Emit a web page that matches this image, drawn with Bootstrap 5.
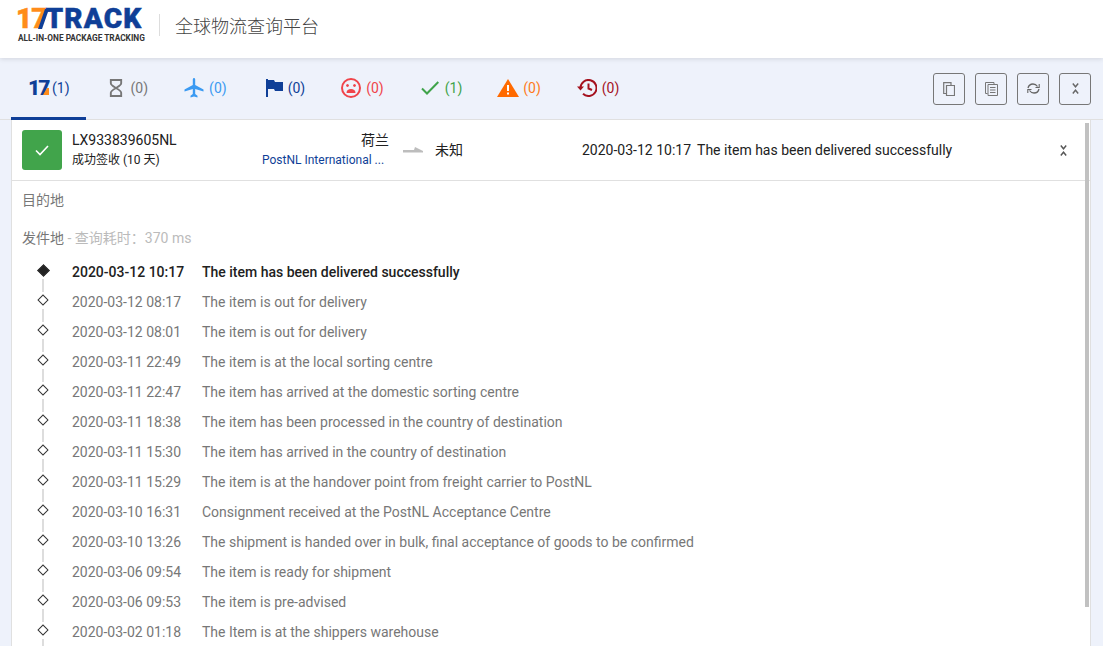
<!DOCTYPE html>
<html lang="zh"><head><meta charset="utf-8"><title>17TRACK</title>
<link href="https://cdn.jsdelivr.net/npm/bootstrap@5.3.0/dist/css/bootstrap.min.css" rel="stylesheet">
<style>
html,body{height:646px;overflow:hidden}
body{background:#eef2fb;font-family:Roboto,"Noto Sans CJK SC",sans-serif;font-size:14px;color:#212121}
.top-bar{height:58px;background:#fff;box-shadow:0 1px 5px rgba(0,0,0,.12);padding:0 0 8px 16px;position:relative;z-index:2}
.logo-box{width:129px;line-height:1}
.logo-main{font-family:Roboto,sans-serif;font-weight:900;font-size:28px;letter-spacing:1.200px;height:24px;line-height:24px;color:#0f3f97;-webkit-text-stroke:.5px #0f3f97;white-space:nowrap;display:flex;align-items:flex-end}
.logo-main b{color:#ff8c1a;-webkit-text-stroke:.5px #ff8c1a;font-weight:900;letter-spacing:-1px}
.logo-main svg{margin:0 -4px 2px -8px;flex:none}
.logo-sub{font-family:Roboto,sans-serif;font-weight:700;font-size:8.300px;color:#333;margin-top:3px;white-space:nowrap;margin-left:2px}
.top-sep{width:1px;height:22px;background:#ddd;margin:0 15px 0 14px}
.top-title{font-size:18px;color:#444;font-family:"Noto Sans CJK SC",sans-serif;font-weight:300}
.tab-bar{height:62px;padding:0 12px 0 11px;border-bottom:1px solid #e0e0e0}
.tab-item{height:62px;padding:1px 18px 0;gap:5px;border-bottom:3px solid transparent;margin-bottom:-1px}
.tab-item.is-on{border-bottom-color:#0f3f97;padding-left:17px;padding-right:16px;gap:4px}
.tab-item svg{display:block;flex:none}
.t-hour{padding-left:22px;gap:7px}
.t-flag{margin-left:3px}
.t-check{margin-left:1px;gap:6px}
.t-warn{margin-left:-1px;gap:4px}
.brand-mini{display:flex;flex:none;align-items:flex-end;width:20px;height:18px;font:900 21px/18px Roboto,sans-serif;letter-spacing:-2px}
.brand-mini svg{margin:0 0 2px -5px}
.c-blue{color:#0f3f97}.c-grey{color:#777}.c-sky{color:#3a9af2}.c-red{color:#f0444a}.c-green{color:#3fa34a}.c-orange{color:#ff7a1a}.c-dark{color:#a5121f}
.tool-btn{width:32px;height:32px;padding:0;border:1px solid #777;border-radius:3px;background:transparent;display:flex;align-items:center;justify-content:center}
.panel{margin:0 12px 0 11px;height:526px;background:#fff;border:1px solid #e0e0e0;border-top:0;border-bottom:0;position:relative;overflow:hidden}
.summary{height:61px;border-bottom:1px solid #e0e0e0;padding-left:10px}
.ok-box{width:40px;height:40px;background:#41a44b;border-radius:3px;margin-right:10px}
.num{width:190px;line-height:20px}
.num .sub{font-size:12px}
.origin{width:127px;text-align:right;line-height:20px}
.origin .carrier{font-size:12px;color:#0f3f97;white-space:nowrap;padding-right:6px}
.arrow{margin:0 12px 0 14px}
.dest{width:147px}
.latest{width:478px;white-space:nowrap}
.latest span{margin-right:6px}
.detail{padding:9px 10px 0}
.lbl{height:20px;line-height:20px;color:#777;margin-bottom:18px}
.lbl span{color:#bbb}
.lbl.second{margin-bottom:9px}
.ev{height:30px;line-height:30px;color:#777;display:flex;position:relative;white-space:nowrap}
.ev.cur{color:#212121;font-weight:500}
.ev-time{width:130px;margin-left:50px;flex:none}
.dot{position:absolute;left:17px;top:9px;width:8px;height:8px;border:1px solid #333;background:#fff;transform:rotate(45deg)}
.ev.cur .dot{background:#222;top:9px;left:16.500px;width:9px;height:9px}
.ev:not(.last)::after{content:"";position:absolute;left:20px;top:22px;width:2px;height:13px;background:#ddd}
.rail{position:absolute;right:1px;top:3px;width:4px;height:484px;background:#c1c1c1}
</style></head><body>
<header class="top-bar d-flex align-items-center">
  <div class="logo-box"><div class="logo-main"><b>17</b><svg width="11" height="20" viewBox="0 0 11 20"><path d="M7 0h4L4 20H0z" fill="#0f3f97"/></svg>TRACK</div><div class="logo-sub">ALL-IN-ONE PACKAGE TRACKING</div></div>
  <div class="top-sep"></div>
  <div class="top-title">全球物流查询平台</div>
</header>
<nav class="tab-bar d-flex align-items-center justify-content-between">
  <div class="d-flex">
    <div class="tab-item is-on d-flex align-items-center c-blue"><span class="brand-mini">17<svg width="6" height="7" viewBox="0 0 6 7"><path d="M4 0h2v7H0z" fill="#ff8c1a"/></svg></span><span>(1)</span></div>
    <div class="tab-item t-hour d-flex align-items-center c-grey"><svg width="16" height="20" viewBox="0 0 17 20" fill="none" stroke="#777" stroke-width="2"><path d="M2 1.500h13M2 18.500h13M3 2v3c0 2 3 3.500 5.500 5C11 11.500 14 13 14 15v3M14 2v3c0 2-3 3.500-5.500 5C6 11.500 3 13 3 15v3"/></svg><span>(0)</span></div>
    <div class="tab-item d-flex align-items-center c-sky"><svg width="20" height="20" viewBox="0 0 20 20" fill="#3a9af2"><path d="M8.800 1.500C8.800.6 9.400 0 10 0s1.200.6 1.200 1.500V7l8.300 4.500v2l-8.300-2.500v5l2.300 1.800V19.500L10 18.500l-3.500 1v-1.700l2.300-1.800v-5L.5 13.500v-2L8.800 7z"/></svg><span>(0)</span></div>
    <div class="tab-item t-flag d-flex align-items-center c-blue"><svg width="17" height="18" viewBox="0 0 17 18" fill="#0f3f97"><path d="M0 0h2v18H0zM2 1h6l1 2h8v9H9l-1-2H2z"/></svg><span>(0)</span></div>
    <div class="tab-item d-flex align-items-center c-red"><svg width="20" height="20" viewBox="0 0 20 20" fill="none" stroke="#f0444a" stroke-width="2"><circle cx="10" cy="10" r="9"/><circle cx="6.500" cy="7.500" r="1" fill="#f0444a" stroke-width="1"/><circle cx="13.500" cy="7.500" r="1" fill="#f0444a" stroke-width="1"/><path d="M5.500 15c0-3 2-4 4.500-4s4.500 1 4.500 4z" fill="#f0444a" stroke="none"/></svg><span>(0)</span></div>
    <div class="tab-item t-check d-flex align-items-center c-green"><svg width="18" height="14" viewBox="0 0 18 14" fill="none" stroke="#3fa34a" stroke-width="2"><path d="M1 7.500l5 5L17.300 1"/></svg><span>(1)</span></div>
    <div class="tab-item t-warn d-flex align-items-center c-orange"><svg width="22" height="18" viewBox="0 0 22 18"><path d="M11 0l11 18H0z" fill="#ff6a00"/><path d="M10 6h2v6h-2zM10 13.500h2v2h-2z" fill="#fff"/></svg><span>(0)</span></div>
    <div class="tab-item d-flex align-items-center c-dark"><svg width="20" height="18" viewBox="0 0 20 18" fill="none" stroke="#a5121f" stroke-width="2"><path d="M3.500 9a8 8 0 1 1 2.500 5.800"/><path d="M0 7.500h7L3.500 11.500z" fill="#a5121f" stroke="none"/><path d="M11.500 4.500V9.500l3.500 1.500"/></svg><span>(0)</span></div>
  </div>
  <div class="d-flex" style="gap:10px">
    <button class="tool-btn" aria-label="复制"><svg width="12" height="14" viewBox="0 0 12 14" fill="none" stroke="#777" stroke-width="1.200"><path d="M3 11.500H.7V.7H8V3"/><path d="M3.500 3.500h8v10h-8z"/></svg></button>
    <button class="tool-btn" aria-label="粘贴"><svg width="13" height="14" viewBox="0 0 13 14" fill="none" stroke="#777"><path d="M2.500 11.500H.5V.5H9V2"/><path d="M3 2.500h9.500v11H3z"/><path d="M5 5.500h5.500M5 8h5.500M5 10.500h5.500"/></svg></button>
    <button class="tool-btn" aria-label="刷新"><svg width="13" height="11" viewBox="0 0 13 11" fill="none" stroke="#666" stroke-width="1.300"><path d="M1 5C1.600 2.500 3.500 1 6 1c2 0 3.500 1 4.500 2.500M12 6c-.6 2.500-2.500 4-5 4-2 0-3.500-1-4.500-2.500"/><path d="M8.500 4.500h3.700V1M4.500 6.500H.8V10" stroke-width="1.100"/></svg></button>
    <button class="tool-btn" aria-label="收起"><svg width="7" height="11" viewBox="0 0 7 11" fill="none" stroke="#666" stroke-width="1.400"><path d="M.8.500L3.500 3.800 6.200.500M.8 10.500L3.500 7.200 6.200 10.500"/></svg></button>
  </div>
</nav>
<main class="panel">
  <div class="summary d-flex align-items-center">
    <div class="ok-box d-flex align-items-center justify-content-center flex-none"><svg width="14" height="11" viewBox="0 0 14 11" fill="none" stroke="#fff" stroke-width="1.600"><path d="M1 5.500l4 4L13 1"/></svg></div>
    <div class="num"><div>LX933839605NL</div><div class="sub">成功签收 (10 天)</div></div>
    <div class="origin"><div>荷兰</div><div class="carrier">PostNL International ...</div></div>
    <svg class="arrow" width="20" height="6" viewBox="0 0 20 6"><path d="M0 3h11l1-3 8 4v1.500H0z" fill="#bdbdbd"/></svg>
    <div class="dest">未知</div>
    <div class="latest"><span>2020-03-12 10:17</span>The item has been delivered successfully</div>
    <svg width="7" height="11" viewBox="0 0 7 11" fill="none" stroke="#555" stroke-width="1.400"><path d="M.8.500L3.500 3.800 6.200.500M.8 10.500L3.500 7.200 6.200 10.500"/></svg>
  </div>
  <div class="detail">
    <div class="lbl">目的地</div>
    <div class="lbl second">发件地<span> - 查询耗时：370 ms</span></div>
    <div class="ev cur"><i class="dot"></i><div class="ev-time">2020-03-12 10:17</div><div>The item has been delivered successfully</div></div>
    <div class="ev"><i class="dot"></i><div class="ev-time">2020-03-12 08:17</div><div>The item is out for delivery</div></div>
    <div class="ev"><i class="dot"></i><div class="ev-time">2020-03-12 08:01</div><div>The item is out for delivery</div></div>
    <div class="ev"><i class="dot"></i><div class="ev-time">2020-03-11 22:49</div><div>The item is at the local sorting centre</div></div>
    <div class="ev"><i class="dot"></i><div class="ev-time">2020-03-11 22:47</div><div>The item has arrived at the domestic sorting centre</div></div>
    <div class="ev"><i class="dot"></i><div class="ev-time">2020-03-11 18:38</div><div>The item has been processed in the country of destination</div></div>
    <div class="ev"><i class="dot"></i><div class="ev-time">2020-03-11 15:30</div><div>The item has arrived in the country of destination</div></div>
    <div class="ev"><i class="dot"></i><div class="ev-time">2020-03-11 15:29</div><div>The item is at the handover point from freight carrier to PostNL</div></div>
    <div class="ev"><i class="dot"></i><div class="ev-time">2020-03-10 16:31</div><div>Consignment received at the PostNL Acceptance Centre</div></div>
    <div class="ev"><i class="dot"></i><div class="ev-time">2020-03-10 13:26</div><div>The shipment is handed over in bulk, final acceptance of goods to be confirmed</div></div>
    <div class="ev"><i class="dot"></i><div class="ev-time">2020-03-06 09:54</div><div>The item is ready for shipment</div></div>
    <div class="ev"><i class="dot"></i><div class="ev-time">2020-03-06 09:53</div><div>The item is pre-advised</div></div>
    <div class="ev"><i class="dot"></i><div class="ev-time">2020-03-02 01:18</div><div>The Item is at the shippers warehouse</div></div>
  </div>
  <div class="rail"></div>
</main>
</body></html>
